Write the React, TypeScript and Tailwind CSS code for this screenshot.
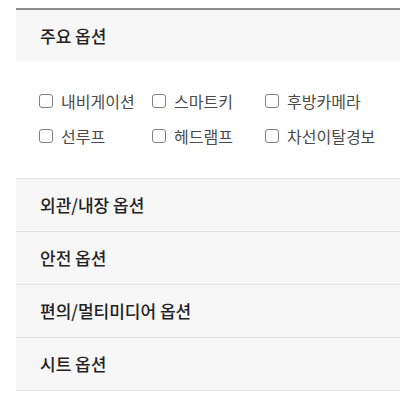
import { useState } from 'react';

const mainOptions = ['내비게이션', '스마트키', '후방카메라', '선루프', '헤드램프', '차선이탈경보'];
const sections = ['외관/내장 옵션', '안전 옵션', '편의/멀티미디어 옵션', '시트 옵션'];

export default function App() {
  const [checked, setChecked] = useState<Record<string, boolean>>({});

  return (
    <div
      className="min-h-[400px] bg-white pt-2 pl-4"
      style={{ fontFamily: '"Noto Sans CJK KR", "Noto Sans", sans-serif' }}
    >
      <div className="w-[400px] border-t-2 border-[#8c8c8c]">
        {/* 주요 옵션 */}
        <div className="flex h-[52px] items-center bg-[#f7f7f7] px-6 text-[17px] font-medium text-[#222]">
          주요 옵션
        </div>
        <div className="grid grid-cols-[113px_113px_113px] gap-y-[13px] px-[23px] pt-[28px] pb-[31px]">
          {mainOptions.map((opt) => (
            <label key={opt} className="flex h-[22px] cursor-pointer items-center gap-[8px] text-[16px] text-[#4a4a4a]">
              <input
                type="checkbox"
                checked={!!checked[opt]}
                onChange={() => setChecked((c) => ({ ...c, [opt]: !c[opt] }))}
                className="h-[14px] w-[14px] shrink-0 appearance-none rounded-[3px] border-[1.5px] border-[#808080] bg-white checked:bg-[#555]"
              />
              {opt}
            </label>
          ))}
        </div>

        {/* 나머지 옵션 */}
        {sections.map((s) => (
          <div
            key={s}
            className="flex h-[53px] items-center border-t border-[#e2e2e2] bg-[#f7f7f7] px-6 text-[17px] font-medium text-[#222]"
          >
            {s}
          </div>
        ))}
        <div className="border-t border-[#e2e2e2]" />
      </div>
    </div>
  );
}
